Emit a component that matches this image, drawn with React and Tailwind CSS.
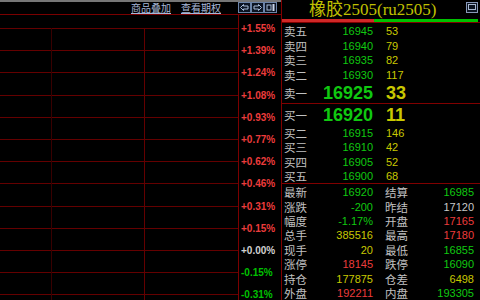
import React from "react";

const NUM = { fontFamily: '"Liberation Sans", Arial, sans-serif' };
const CJK = { fontFamily: '"Noto Sans CJK SC", sans-serif' };

const G = "text-[#10c810]";
const Y = "text-[#c8c800]";
const R = "text-[#ec3c3c]";
const W = "text-[#c8c8c8]";

const pctLabels = [
  ["+1.55%", R], ["+1.39%", R], ["+1.24%", R], ["+1.08%", R], ["+0.93%", R],
  ["+0.77%", R], ["+0.62%", R], ["+0.46%", R], ["+0.31%", R], ["+0.15%", R],
  ["+0.00%", "text-[#d0d0d0]"], ["-0.15%", "text-[#00c000]"], ["-0.31%", "text-[#00c000]"],
];

const sells = [
  ["卖五", "16945", "53"],
  ["卖四", "16940", "79"],
  ["卖三", "16935", "82"],
  ["卖二", "16930", "117"],
];
const buys = [
  ["买二", "16915", "146"],
  ["买三", "16910", "42"],
  ["买四", "16905", "52"],
  ["买五", "16900", "68"],
];

const stats = [
  ["最新", "16920", G, "结算", "16985", G],
  ["涨跌", "-200", G, "昨结", "17120", W],
  ["幅度", "-1.17%", G, "开盘", "17165", R],
  ["总手", "385516", Y, "最高", "17180", R],
  ["现手", "20", Y, "最低", "16855", G],
  ["涨停", "18145", R, "跌停", "16090", G],
  ["持仓", "177875", Y, "仓差", "6498", Y],
  ["外盘", "192211", R, "内盘", "193305", G],
];

function Btn({ children }) {
  return (
    <svg width="13" height="11" viewBox="0 0 13 11">
      <rect x="0.5" y="0.5" width="12" height="10" fill="#0c1422" stroke="#6c84a8" />
      {children}
    </svg>
  );
}

const LBL = "w-[40px] pl-[2px] text-[11.5px] leading-[12px] text-[#c0c0c0]";

export default function App() {
  const lines = Array.from({ length: 13 }, (_, i) => 13 + 22.2 * i);
  return (
    <div className="flex h-[300px] w-[480px] overflow-hidden bg-black">
      {/* left chart panel */}
      <div className="flex h-[300px] w-[281px] flex-col overflow-hidden">
        <div className="h-[2px] shrink-0 bg-[#767676]" />
        <div className="flex h-[12px] shrink-0 items-center">
          <div className="ml-[131px] flex gap-[10px] text-[10px] leading-[12px] text-[#a8b8d8] underline" style={CJK}>
            <span>商品叠加</span>
            <span>查看期权</span>
          </div>
          <div className="ml-[17px] -mt-[2px] flex">
            <Btn>
              <path d="M2.5 5.5 L5.5 2.5 L5.5 4 L10 4 L10 7 L5.5 7 L5.5 8.5 Z" fill="none" stroke="#a8bcd8" strokeWidth="1" />
            </Btn>
            <Btn>
              <path d="M10.5 5.5 L7.5 2.5 L7.5 4 L3 4 L3 7 L7.5 7 L7.5 8.5 Z" fill="none" stroke="#a8bcd8" strokeWidth="1" />
            </Btn>
            <Btn>
              <rect x="3" y="3" width="4" height="5" fill="none" stroke="#a8bcd8" />
              <rect x="8.5" y="2" width="2" height="7" fill="#c8d4e8" />
            </Btn>
          </div>
        </div>
        <div className="flex min-h-0 flex-1 overflow-hidden border-t border-[#7a0000]">
          <div className="relative w-[239px] border-r border-[#7a0000]">
            <svg width="238" height="285" className="absolute left-0 top-0">
              {lines.map((y, i) => (
                <line key={i} x1="0" x2="238" y1={Math.round(y) + 0.5} y2={Math.round(y) + 0.5} stroke="#640000" strokeWidth="1" />
              ))}
              <line x1="51.5" x2="51.5" y1="13" y2="285" stroke="#380000" strokeWidth="1" />
              <line x1="144.5" x2="144.5" y1="13" y2="285" stroke="#640000" strokeWidth="1" />
            </svg>
          </div>
          <div className="flex min-h-0 flex-1 flex-col overflow-hidden pl-[2px] pt-[3px]">
            {pctLabels.map(([t, c]) => (
              <div key={t} className={`flex h-[22.2px] shrink-0 items-center text-[10px] font-bold leading-none ${c}`} style={NUM}>
                {t}
              </div>
            ))}
          </div>
        </div>
      </div>

      {/* right quote panel */}
      <div className="flex h-[300px] w-[199px] flex-col overflow-hidden border-l border-[#800000]">
        <div className="flex h-[19px] shrink-0 items-center">
          <span className="ml-[27px] text-[17px] leading-[19px] text-[#c0c000]" style={{ fontFamily: '"Liberation Serif", "Noto Sans CJK SC", serif' }}>
            橡胶2505(ru2505)
          </span>
          <svg className="ml-auto mr-[2px] -mt-[4px]" width="12" height="11" viewBox="0 0 12 11">
            <rect x="0.5" y="0.5" width="11" height="10" fill="#0c1422" stroke="#8898b8" />
            <rect x="2.5" y="2.5" width="7" height="5" fill="none" stroke="#a8b8d0" />
          </svg>
        </div>
        <div className="flex h-[3px] shrink-0 pr-[2px]">
          <div className="w-[92px] bg-[#d02828]" />
          <div className="flex-1 bg-[#00c000]" />
        </div>
        <div className="h-[1px] shrink-0 bg-[#800000]" />
        <div className="shrink-0 pt-[1px]">
          {sells.map(([l, p, v]) => (
            <div key={l} className="flex h-[14.5px] items-center">
              <span className={LBL} style={CJK}>{l}</span>
              <span className={`w-[51px] text-right text-[11px] leading-[12px] ${G}`} style={NUM}>{p}</span>
              <span className={`ml-[13px] text-[11px] leading-[12px] ${Y}`} style={NUM}>{v}</span>
            </div>
          ))}
        </div>
        <div className="flex h-[21px] shrink-0 items-center">
          <span className={LBL} style={CJK}>卖一</span>
          <span className="w-[51px] text-right text-[18px] font-bold leading-[18px] text-[#10c810]" style={NUM}>16925</span>
          <span className="ml-[13px] text-[18px] font-bold leading-[18px] text-[#c8c800]" style={NUM}>33</span>
        </div>
        <div className="h-[1px] shrink-0 bg-[#800000]" />
        <div className="flex h-[22px] shrink-0 items-center">
          <span className={LBL} style={CJK}>买一</span>
          <span className="w-[51px] text-right text-[18px] font-bold leading-[18px] text-[#10c810]" style={NUM}>16920</span>
          <span className="ml-[13px] text-[18px] font-bold leading-[18px] text-[#c8c800]" style={NUM}>11</span>
        </div>
        <div className="shrink-0">
          {buys.map(([l, p, v]) => (
            <div key={l} className="flex h-[14.25px] items-center">
              <span className={LBL} style={CJK}>{l}</span>
              <span className={`w-[51px] text-right text-[11px] leading-[12px] ${G}`} style={NUM}>{p}</span>
              <span className={`ml-[13px] text-[11px] leading-[12px] ${Y}`} style={NUM}>{v}</span>
            </div>
          ))}
        </div>
        <div className="h-[1px] shrink-0 bg-[#800000]" />
        <div className="shrink-0 pt-[1px]">
          {stats.map(([l1, v1, c1, l2, v2, c2]) => (
            <div key={l1} className="flex h-[14.4px] items-center">
              <span className={LBL} style={CJK}>{l1}</span>
              <span className={`w-[51px] text-right text-[11px] leading-[12px] ${c1}`} style={NUM}>{v1}</span>
              <span className="ml-[12px] text-[11.5px] leading-[12px] text-[#c0c0c0]" style={CJK}>{l2}</span>
              <span className={`flex-1 pr-[6px] text-right text-[11px] leading-[12px] ${c2}`} style={NUM}>{v2}</span>
            </div>
          ))}
        </div>
      </div>
    </div>
  );
}
